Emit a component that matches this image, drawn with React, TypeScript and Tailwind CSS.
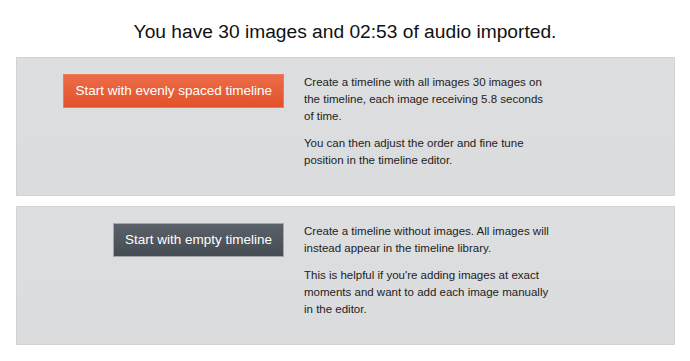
import { FC, ReactNode } from "react";

interface OptionProps {
  button: ReactNode;
  children: ReactNode;
}

const Option: FC<OptionProps> = ({ button, children }) => {
  return (
    <div className="flex h-[139px] border border-[#d2d3d5] bg-gradient-to-b from-[#dddee0] to-[#dbdcde] pt-[16px]">
      <div className="flex w-[267px] shrink-0 justify-end items-start">{button}</div>
      <div className="ml-[20px] w-[247px] text-[11.5px] leading-[17px] text-[#222]">{children}</div>
    </div>
  );
};

export default function App() {
  return (
    <div
      className="w-[690px] h-[361px] bg-white px-[16px]"
      style={{ fontFamily: '"Liberation Sans", Arial, sans-serif' }}
    >
      <h1 className="pt-[20px] pb-[13px] text-center text-[19.2px] leading-[24px] text-[#111]">
        You have 30 images and 02:53 of audio imported.
      </h1>

      <div className="flex flex-col gap-[10px] w-[659px]">
        <Option
          button={
            <button className="h-[34px] px-[11px] border border-[#ef7a57] bg-gradient-to-b from-[#ec6c47] to-[#e2522a] text-[13.5px] text-white">
              Start with evenly spaced timeline
            </button>
          }
        >
          <p>
            Create a timeline with all images 30 images on the timeline, each image receiving 5.8 seconds of time.
          </p>
          <p className="mt-[10px]">You can then adjust the order and fine tune position in the timeline editor.</p>
        </Option>

        <Option
          button={
            <button className="h-[34px] px-[11px] border border-[#a3a6aa] bg-gradient-to-b from-[#5b6168] to-[#464c53] text-[13.5px] text-white">
              Start with empty timeline
            </button>
          }
        >
          <p>Create a timeline without images. All images will instead appear in the timeline library.</p>
          <p className="mt-[10px]">
            This is helpful if you're adding images at exact moments and want to add each image manually in the editor.
          </p>
        </Option>
      </div>
    </div>
  );
}
